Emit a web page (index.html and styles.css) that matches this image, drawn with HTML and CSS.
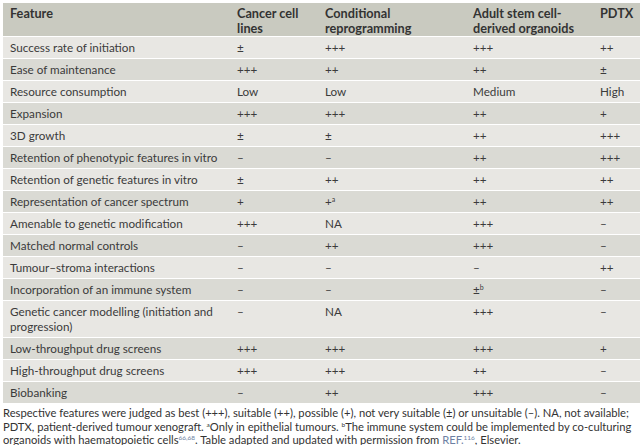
FILE: index.html
```
<!DOCTYPE html>
<html>
<head>
<meta charset="utf-8">
<link rel="stylesheet" href="styles.css">
</head>
<body>
<div class="page">
<table class="tbl">
<colgroup>
<col class="c1"><col class="c2"><col class="c3"><col class="c4"><col class="c5">
</colgroup>
<thead>
<tr><th>Feature</th><th>Cancer cell<br>lines</th><th>Conditional<br>reprogramming</th><th>Adult stem cell-<br>derived organoids</th><th>PDTX</th></tr>
</thead>
<tbody>
<tr><td>Success rate of initiation</td><td>±</td><td>+++</td><td>+++</td><td>++</td></tr>
<tr><td>Ease of maintenance</td><td>+++</td><td>++</td><td>++</td><td>±</td></tr>
<tr><td>Resource consumption</td><td>Low</td><td>Low</td><td>Medium</td><td>High</td></tr>
<tr><td>Expansion</td><td>+++</td><td>+++</td><td>++</td><td>+</td></tr>
<tr><td>3D growth</td><td>±</td><td>±</td><td>++</td><td>+++</td></tr>
<tr><td>Retention of phenotypic features in vitro</td><td>–</td><td>–</td><td>++</td><td>+++</td></tr>
<tr><td>Retention of genetic features in vitro</td><td>±</td><td>++</td><td>++</td><td>++</td></tr>
<tr><td>Representation of cancer spectrum</td><td>+</td><td>+<sup>a</sup></td><td>++</td><td>++</td></tr>
<tr><td>Amenable to genetic modification</td><td>+++</td><td>NA</td><td>+++</td><td>–</td></tr>
<tr><td>Matched normal controls</td><td>–</td><td>++</td><td>+++</td><td>–</td></tr>
<tr><td>Tumour–stroma interactions</td><td>–</td><td>–</td><td>–</td><td>++</td></tr>
<tr><td>Incorporation of an immune system</td><td>–</td><td>–</td><td>±<sup>b</sup></td><td>–</td></tr>
<tr><td>Genetic cancer modelling (initiation and<br>progression)</td><td>–</td><td>NA</td><td>+++</td><td>–</td></tr>
<tr><td>Low-throughput drug screens</td><td>+++</td><td>+++</td><td>+++</td><td>+</td></tr>
<tr><td>High-throughput drug screens</td><td>+++</td><td>+++</td><td>++</td><td>–</td></tr>
<tr><td>Biobanking</td><td>–</td><td>++</td><td>+++</td><td>–</td></tr>
</tbody>
</table>
<p class="caption">Respective features were judged as best (+++), suitable (++), possible (+), not very suitable (±) or unsuitable (–). NA, not available;<br>PDTX, patient-derived tumour xenograft. <sup>a</sup>Only in epithelial tumours. <sup>b</sup>The immune system could be implemented by co-culturing<br>organoids with haematopoietic cells<sup class="ref">66,68</sup>. Table adapted and updated with permission from <span class="ref">REF.<sup>116</sup></span>, Elsevier.</p>
</div>
</body>
</html>
```
FILE: styles.css
```
html, body {
  margin: 0;
  padding: 0;
  background: #ffffff;
}
.page {
  padding: 3px 3px 0 3px;
  font-family: Lato, "Liberation Sans", sans-serif;
  color: #3b3b3b;
}
.tbl {
  width: 637px;
  border-collapse: collapse;
  table-layout: fixed;
  font-size: 11.7px;
}
.c1 { width: 227px; }
.c2 { width: 88px; }
.c3 { width: 148px; }
.c4 { width: 127px; }
.c5 { width: 47px; }
.tbl th {
  background: #c9cac0;
  text-align: left;
  vertical-align: top;
  font-weight: 700;
  font-size: 12.7px;
  line-height: 15px;
  padding: 3px 0 0 7px;
  color: #333333;
  border-bottom: 1px solid #ffffff;
  white-space: nowrap;
}
.tbl td {
  text-align: left;
  vertical-align: top;
  line-height: 15px;
  padding: 3px 0 3px 7px;
  border-bottom: 1px solid #ffffff;
  white-space: nowrap;
}
.tbl tbody tr:nth-child(odd) td { background: #e8e7e3; }
.tbl tbody tr:nth-child(even) td { background: #dadad4; }
.tbl sup {
  font-size: 7px;
  line-height: 0;
  vertical-align: 4px;
}
.caption {
  margin: 2px 0 0 0;
  font-size: 11.2px;
  line-height: 13.5px;
  color: #333333;
  white-space: nowrap;
}
.caption sup {
  font-size: 6.5px;
  line-height: 0;
  vertical-align: 4px;
}
.ref { color: #6d7fa3; }
```
